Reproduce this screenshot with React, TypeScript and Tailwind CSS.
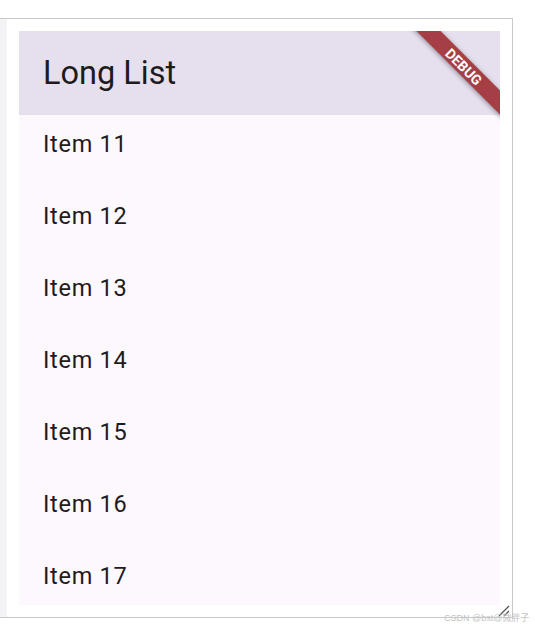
import React from 'react';

const items = [11, 12, 13, 14, 15, 16, 17];

// Flutter style debug ribbon in the top right corner
const DebugBanner = () => (
  <div className="pointer-events-none absolute right-[-29px] top-[27px] flex h-[17px] w-[130px] rotate-45 items-center justify-center bg-[#a63e46] shadow-[0_1px_5px_rgba(0,0,0,0.4)]">
    <span className="text-[14px] font-bold leading-none text-white">DEBUG</span>
  </div>
);

const ResizeHandle = () => (
  <svg className="absolute left-[498px] top-[604px]" width="13" height="13" viewBox="0 0 13 13">
    <line x1="1" y1="12" x2="11" y2="2" stroke="#555" strokeWidth="1.2" />
    <line x1="6" y1="12" x2="11" y2="7" stroke="#555" strokeWidth="1.2" />
  </svg>
);

export default function App() {
  return (
    <div
      className="relative h-[631px] w-[535px] overflow-hidden bg-white"
      style={{ fontFamily: 'Roboto, "Noto Sans", sans-serif' }}
    >
      <div className="h-[18px]" />
      <div className="flex h-[600px] w-[513px] border-y border-r border-[#c9c9c9]">
        <div className="w-[7px] shrink-0 bg-[#f3f3f5]" />
        <div className="flex-1 pl-[12px] pt-[12px]">
          <div className="relative flex h-[574px] w-[481px] flex-col overflow-hidden bg-[#fdf7fe]">
            <div className="relative z-10 flex h-[84px] shrink-0 items-center bg-[#e6e0ee] pl-[24px]">
              <h1 className="text-[32.5px] font-normal leading-none text-[#1d1b20]">Long List</h1>
            </div>
            <div className="flex-1 overflow-hidden">
              <ul className="mt-[-6px]">
                {items.map((n) => (
                  <li key={n} className="flex h-[72px] items-center pl-[24px]">
                    <span className="text-[23.5px] leading-none tracking-[0.7px] text-[#1d1b20]">Item {n}</span>
                  </li>
                ))}
              </ul>
            </div>
            <div className="absolute inset-0 z-20 overflow-hidden">
              <DebugBanner />
            </div>
          </div>
        </div>
      </div>
      <ResizeHandle />
      <span
        className="absolute left-[444px] top-[614px] whitespace-nowrap text-[9px] leading-none text-[#c4c4c4]"
        style={{ fontFamily: '"Liberation Sans", "Noto Sans CJK SC", sans-serif' }}
      >
        CSDN @bst@微胖子
      </span>
    </div>
  );
}
